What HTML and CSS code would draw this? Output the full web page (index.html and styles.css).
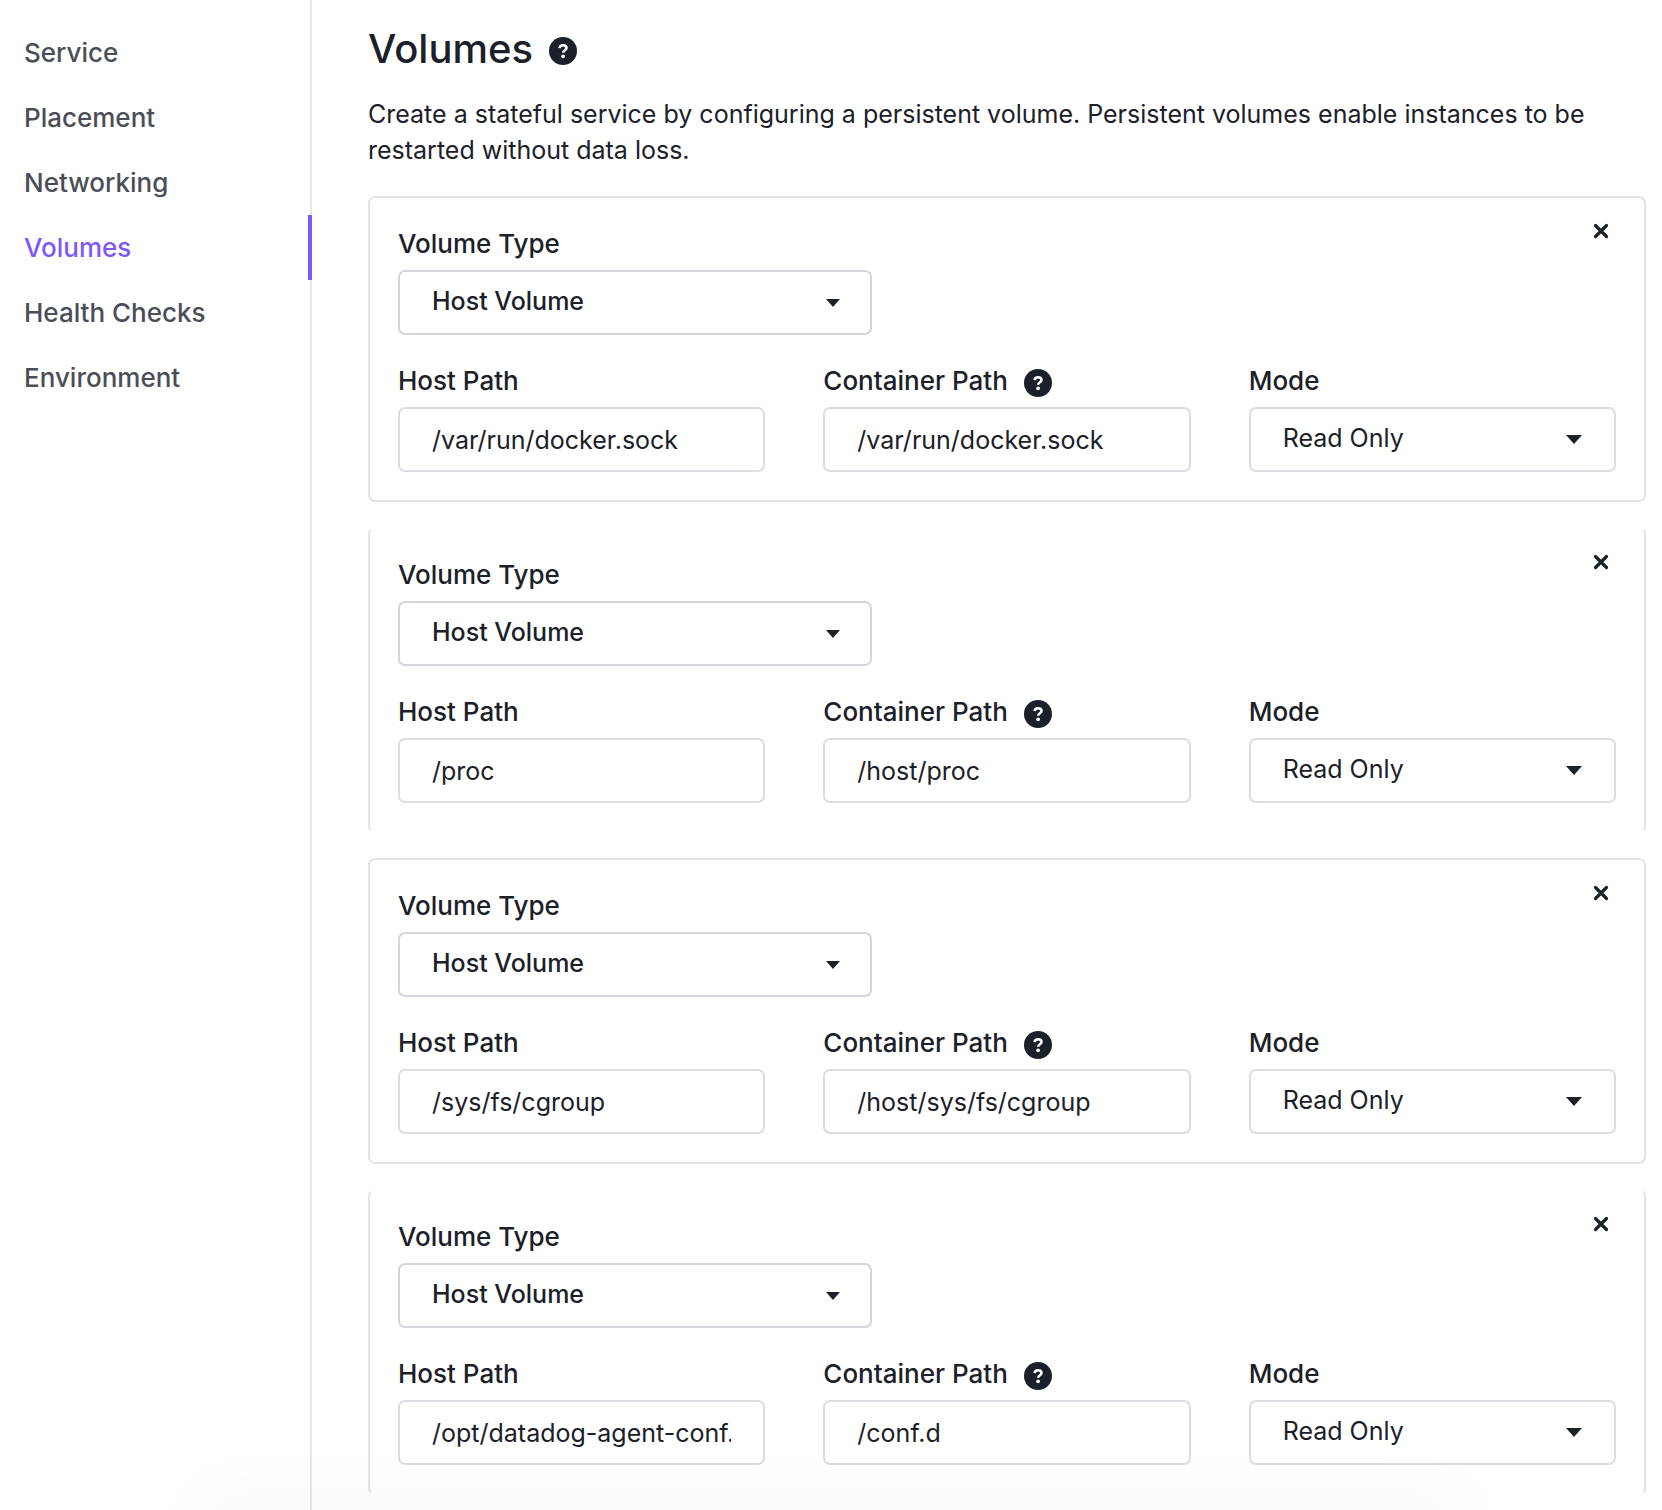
FILE: index.html
```html
<!DOCTYPE html>
<html lang="en">
<head>
<meta charset="utf-8">
<title>Volumes</title>
<meta name="viewport" content="width=device-width, initial-scale=1">
<link rel="stylesheet" href="styles.css">
</head>
<body>
<svg class="sprite" aria-hidden="true">
  <symbol id="icon-help" viewBox="0 0 28 28">
    <circle cx="14" cy="14" r="14" fill="#1b2029"/>
    <path d="M10.600 11.200c.2-2 1.600-3 3.500-3s3.400 1.100 3.400 2.800c0 2.300-3.300 2.300-3.300 4.700" fill="none" stroke="#fff" stroke-width="2.600"/>
    <circle cx="14.100" cy="19.300" r="1.900" fill="#fff"/>
  </symbol>
  <symbol id="icon-close" viewBox="0 0 16 16">
    <path d="M2.500 2.500l11 11M13.500 2.500l-11 11" stroke="#1b2029" stroke-width="3.200" stroke-linecap="round"/>
  </symbol>
  <symbol id="icon-caret" viewBox="0 0 16 9">
    <path d="M0 0h16L8 9z" fill="#1b2029"/>
  </symbol>
</svg>
<div class="layout">
  <nav class="sidebar">
    <a class="nav-link" href="#service">Service</a>
    <a class="nav-link" href="#placement">Placement</a>
    <a class="nav-link" href="#networking">Networking</a>
    <a class="nav-link active" href="#volumes" aria-current="page">Volumes</a>
    <a class="nav-link" href="#health">Health Checks</a>
    <a class="nav-link" href="#environment">Environment</a>
  </nav>
  <main class="content">
    <header class="heading">
      <h1>Volumes</h1>
      <button class="help" type="button" aria-label="About volumes"><svg><use href="#icon-help"/></svg></button>
    </header>
    <p class="intro">Create a stateful service by configuring a persistent volume. Persistent volumes enable instances to be restarted without data loss.</p>
    <form class="volumes">
      <section class="card">
        <button class="close" type="button" aria-label="Remove volume"><svg><use href="#icon-close"/></svg></button>
        <div class="field field-type">
          <div class="label-row"><label for="type-1">Volume Type</label></div>
          <div class="select"><select id="type-1"><option>Host Volume</option></select><svg class="caret"><use href="#icon-caret"/></svg></div>
        </div>
        <div class="fields">
          <div class="field">
            <div class="label-row"><label for="host-1">Host Path</label></div>
            <input id="host-1" type="text" value="/var/run/docker.sock">
          </div>
          <div class="field">
            <div class="label-row"><label for="container-1">Container Path</label><button class="help" type="button" aria-label="About container path"><svg><use href="#icon-help"/></svg></button></div>
            <input id="container-1" type="text" value="/var/run/docker.sock">
          </div>
          <div class="field">
            <div class="label-row"><label for="mode-1">Mode</label></div>
            <div class="select"><select id="mode-1"><option>Read Only</option></select><svg class="caret"><use href="#icon-caret"/></svg></div>
          </div>
        </div>
      </section>
      <section class="card">
        <button class="close" type="button" aria-label="Remove volume"><svg><use href="#icon-close"/></svg></button>
        <div class="field field-type">
          <div class="label-row"><label for="type-2">Volume Type</label></div>
          <div class="select"><select id="type-2"><option>Host Volume</option></select><svg class="caret"><use href="#icon-caret"/></svg></div>
        </div>
        <div class="fields">
          <div class="field">
            <div class="label-row"><label for="host-2">Host Path</label></div>
            <input id="host-2" type="text" value="/proc">
          </div>
          <div class="field">
            <div class="label-row"><label for="container-2">Container Path</label><button class="help" type="button" aria-label="About container path"><svg><use href="#icon-help"/></svg></button></div>
            <input id="container-2" type="text" value="/host/proc">
          </div>
          <div class="field">
            <div class="label-row"><label for="mode-2">Mode</label></div>
            <div class="select"><select id="mode-2"><option>Read Only</option></select><svg class="caret"><use href="#icon-caret"/></svg></div>
          </div>
        </div>
      </section>
      <section class="card">
        <button class="close" type="button" aria-label="Remove volume"><svg><use href="#icon-close"/></svg></button>
        <div class="field field-type">
          <div class="label-row"><label for="type-3">Volume Type</label></div>
          <div class="select"><select id="type-3"><option>Host Volume</option></select><svg class="caret"><use href="#icon-caret"/></svg></div>
        </div>
        <div class="fields">
          <div class="field">
            <div class="label-row"><label for="host-3">Host Path</label></div>
            <input id="host-3" type="text" value="/sys/fs/cgroup">
          </div>
          <div class="field">
            <div class="label-row"><label for="container-3">Container Path</label><button class="help" type="button" aria-label="About container path"><svg><use href="#icon-help"/></svg></button></div>
            <input id="container-3" type="text" value="/host/sys/fs/cgroup">
          </div>
          <div class="field">
            <div class="label-row"><label for="mode-3">Mode</label></div>
            <div class="select"><select id="mode-3"><option>Read Only</option></select><svg class="caret"><use href="#icon-caret"/></svg></div>
          </div>
        </div>
      </section>
      <section class="card">
        <button class="close" type="button" aria-label="Remove volume"><svg><use href="#icon-close"/></svg></button>
        <div class="field field-type">
          <div class="label-row"><label for="type-4">Volume Type</label></div>
          <div class="select"><select id="type-4"><option>Host Volume</option></select><svg class="caret"><use href="#icon-caret"/></svg></div>
        </div>
        <div class="fields">
          <div class="field">
            <div class="label-row"><label for="host-4">Host Path</label></div>
            <input id="host-4" type="text" value="/opt/datadog-agent-conf.d">
          </div>
          <div class="field">
            <div class="label-row"><label for="container-4">Container Path</label><button class="help" type="button" aria-label="About container path"><svg><use href="#icon-help"/></svg></button></div>
            <input id="container-4" type="text" value="/conf.d">
          </div>
          <div class="field">
            <div class="label-row"><label for="mode-4">Mode</label></div>
            <div class="select"><select id="mode-4"><option>Read Only</option></select><svg class="caret"><use href="#icon-caret"/></svg></div>
          </div>
        </div>
      </section>
    </form>
  </main>
</div>
<div class="bottom-shade" aria-hidden="true"></div>
</body>
</html>
```

FILE: styles.css
```css
* {
  box-sizing: border-box;
}

body {
  margin: 0;
  background: #fff;
  color: #1b2029;
  font-family: Inter, "Liberation Sans", sans-serif;
  font-size: 25px;
}

.sprite {
  display: none;
}

.layout {
  display: flex;
  min-height: 100vh;
}

.sidebar {
  flex: 0 0 312px;
  padding-top: 20px;
  border-right: 2px solid #e6e6e8;
}

.nav-link {
  display: block;
  height: 65px;
  margin-right: -2px;
  padding-left: 24px;
  color: #4b4e57;
  font-size: 26px;
  font-weight: 500;
  line-height: 65px;
  text-decoration: none;
}

.nav-link.active {
  border-right: 4px solid #7d58ff;
  color: #7d58ff;
}

.content {
  flex: 1;
  min-width: 0;
  padding: 20px 16px 16px 56px;
}

.heading {
  display: flex;
  align-items: center;
  gap: 16px;
}

h1 {
  margin: 0;
  font-size: 40px;
  font-weight: 500;
  line-height: 58px;
}

.help,
.close {
  display: block;
  padding: 0;
  border: 0;
  background: none;
}

.help {
  width: 28px;
  height: 28px;
  margin-top: 4px;
}

.help svg,
.close svg {
  display: block;
  width: 100%;
  height: 100%;
}

.intro {
  margin: 18px 0 28px;
  line-height: 36px;
}

.volumes {
  display: grid;
  gap: 25px;
}

.card {
  position: relative;
  padding: 31px 28px 28px;
  border: 2px solid #e3e3e9;
  border-radius: 7px;
}

.card:nth-child(even) {
  border-top-color: transparent;
  border-bottom-color: transparent;
}

.close {
  position: absolute;
  top: 25px;
  right: 35px;
  width: 16px;
  height: 16px;
}

.field-type {
  max-width: 474px;
  margin-bottom: 31px;
}

.fields {
  display: grid;
  grid-template-columns: repeat(3, minmax(0, 1fr));
  gap: 58px;
}

.label-row {
  display: flex;
  align-items: center;
  gap: 16px;
  height: 30px;
  margin-bottom: 11px;
  font-size: 26px;
  font-weight: 500;
  line-height: 30px;
}

input,
select {
  display: block;
  width: 100%;
  height: 65px;
  padding: 0 32px;
  border: 2px solid #dadde2;
  border-radius: 7px;
  background: none;
  color: inherit;
  font: inherit;
}

select {
  appearance: none;
  padding-bottom: 3px;
}

.field-type select {
  border-color: #d5d5db;
  font-weight: 500;
}

.select {
  display: grid;
  align-items: center;
}

.select > * {
  grid-area: 1 / 1;
}

.caret {
  width: 16px;
  height: 9px;
  margin-right: 34px;
  justify-self: end;
  pointer-events: none;
}

.field-type .caret {
  width: 14px;
  height: 8px;
  margin-right: 32px;
}

.bottom-shade {
  position: fixed;
  right: 200px;
  bottom: -20px;
  left: 200px;
  height: 20px;
  box-shadow: 0 0 70px rgba(0, 0, 0, 0.08);
  pointer-events: none;
}
```
